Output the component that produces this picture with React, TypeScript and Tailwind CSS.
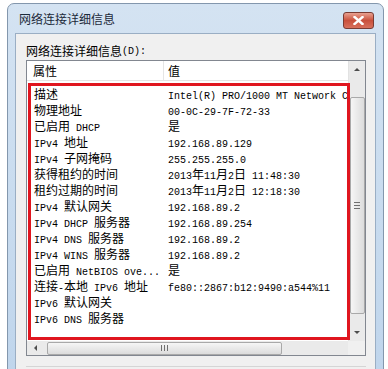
const rows: [string, string][] = [
  ["描述", "Intel(R) PRO/1000 MT Network Connection"],
  ["物理地址", "00-0C-29-7F-72-33"],
  ["已启用 DHCP", "是"],
  ["IPv4 地址", "192.168.89.129"],
  ["IPv4 子网掩码", "255.255.255.0"],
  ["获得租约的时间", "2013年11月2日 11:48:30"],
  ["租约过期的时间", "2013年11月2日 12:18:30"],
  ["IPv4 默认网关", "192.168.89.2"],
  ["IPv4 DHCP 服务器", "192.168.89.254"],
  ["IPv4 DNS 服务器", "192.168.89.2"],
  ["IPv4 WINS 服务器", "192.168.89.2"],
  ["已启用 NetBIOS ove...", "是"],
  ["连接-本地 IPv6 地址", "fe80::2867:b12:9490:a544%11"],
  ["IPv6 默认网关", ""],
  ["IPv6 DNS 服务器", ""],
];

// SimSun-like mix: half-width latin (6px) and full-width CJK (12px)
function T({ s }: { s: string }) {
  const parts = s.match(/[\u0000-\u00ff]+|[^\u0000-\u00ff]+/g) || [];
  return (
    <>
      {parts.map((p, i) =>
        /[\u0000-\u00ff]/.test(p[0]) ? (
          <span key={i} className="font-['Liberation_Mono',monospace] text-[10px]">
            {p}
          </span>
        ) : (
          <span key={i} className="font-['Noto_Sans_CJK_SC',sans-serif] text-[12px]">
            {p}
          </span>
        )
      )}
    </>
  );
}

function Arrow({ dir }: { dir: "up" | "down" | "left" }) {
  const pts = dir === "up" ? "1,5 4,2 7,5" : dir === "down" ? "1,2 4,5 7,2" : "5,1 2,4 5,7";
  return (
    <svg width="8" height="8" viewBox="0 0 8 8">
      <polygon points={pts} fill="#4d4d4d" />
    </svg>
  );
}

export default function App() {
  return (
    <div className="w-[388px] h-[369px] bg-white overflow-hidden pl-[7px] pt-[3px]">
      <div className="w-[377px] h-[380px] rounded-t-[7px] border border-[#8397ad] bg-gradient-to-b from-[#d4e3f2] to-[#bfd5ec] flex flex-col">
        {/* Title bar */}
        <div className="h-[29px] flex items-center justify-between pl-[11px] pr-[9px] pt-[1px]">
          <span className="font-['Noto_Sans_CJK_SC',sans-serif] text-[12px] text-[#1c2a3a] leading-none">
            网络连接详细信息
          </span>
          <div className="w-[31px] h-[17px] mt-[2px] rounded-[3px] border border-[#7a3b33] bg-gradient-to-b from-[#e8a090] via-[#c9503c] to-[#d8705c] flex items-center justify-center">
            <svg width="11" height="9" viewBox="0 0 11 9">
              <path d="M1.5 1 L9.5 8 M9.5 1 L1.5 8" stroke="#fff" strokeWidth="2.4" strokeLinecap="square" />
            </svg>
          </div>
        </div>

        {/* Client area */}
        <div className="mx-[7px] flex-1 bg-[#f0f0f0] border border-[#9aaec4] pl-[10px] pr-[8px] pt-[9px]">
          <div className="h-[16px] flex items-center text-black">
            <T s="网络连接详细信息(D):" />
          </div>

          {/* List view */}
          <div className="relative mt-[1px] w-[340px] h-[296px] border border-[#828790] bg-white flex flex-col">
            <div className="flex-1 flex min-h-0">
              <div className="flex-1 min-w-0 overflow-hidden flex flex-col">
                <div className="h-[20px] flex border-b border-[#e5e5e5] bg-white text-black">
                  <div className="w-[137px] pl-[6px] flex items-center border-r border-[#e5e5e5]">
                    <T s="属性" />
                  </div>
                  <div className="pl-[4px] flex items-center">
                    <T s="值" />
                  </div>
                </div>
                <div className="pt-[4px] overflow-hidden">
                  {rows.map(([k, v]) => (
                    <div key={k} className="h-[16px] flex items-center text-black whitespace-nowrap">
                      <div className="w-[141px] pl-[7px] shrink-0 overflow-hidden">
                        <T s={k} />
                      </div>
                      <div className="flex-1 min-w-0 overflow-hidden">
                        <T s={v} />
                      </div>
                    </div>
                  ))}
                </div>
              </div>
              {/* Vertical scrollbar */}
              <div className="w-[17px] shrink-0 bg-[#eaeaea] border-l border-[#e2e2e2] flex flex-col items-center">
                <div className="h-[17px] w-full flex items-center justify-center">
                  <Arrow dir="up" />
                </div>
                <div className="mt-[19px] h-[217px] w-[15px] rounded-[2px] border border-[#a9a9a9] bg-gradient-to-r from-[#f6f6f6] to-[#dcdcdc] flex items-center justify-center">
                  <div className="w-[6px] flex flex-col gap-[2px]">
                    <div className="h-px bg-[#707070]" />
                    <div className="h-px bg-[#707070]" />
                    <div className="h-px bg-[#707070]" />
                  </div>
                </div>
                <div className="mt-auto h-[17px] w-full flex items-center justify-center">
                  <Arrow dir="down" />
                </div>
              </div>
            </div>
            {/* Horizontal scrollbar */}
            <div className="h-[14px] flex">
              <div className="flex-1 bg-[#eaeaea] flex items-center">
                <div className="w-[18px] h-full flex items-center justify-center">
                  <Arrow dir="left" />
                </div>
                <div className="ml-[2px] w-[235px] h-[13px] rounded-[2px] border border-[#a9a9a9] bg-gradient-to-b from-[#f6f6f6] to-[#dcdcdc] flex items-center justify-center">
                  <div className="h-[6px] flex gap-[2px]">
                    <div className="w-px bg-[#707070]" />
                    <div className="w-px bg-[#707070]" />
                    <div className="w-px bg-[#707070]" />
                  </div>
                </div>
              </div>
              <div className="w-[17px] bg-[#f0f0f0]" />
            </div>

            {/* Red highlight box */}
            <div className="absolute left-[1px] top-[22px] w-[322px] h-[257px] border-[3px] border-[#e0161f]" />
          </div>

          <div className="mt-[10px] w-[340px] border-t border-[#d5d5d5]" />
        </div>
      </div>
    </div>
  );
}
